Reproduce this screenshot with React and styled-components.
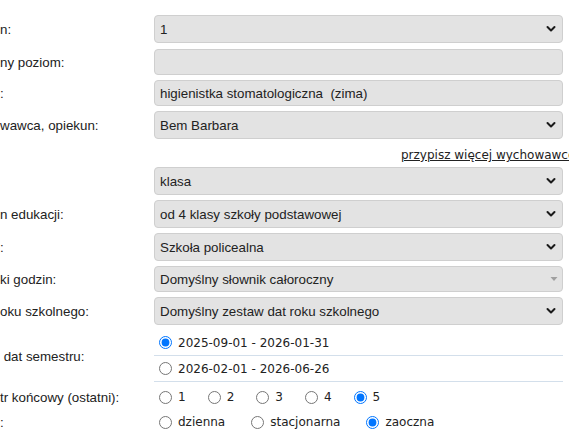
import React from 'react';
import styled, { createGlobalStyle } from 'styled-components';

const GlobalStyle = createGlobalStyle`
  html, body {
    margin: 0;
    padding: 0;
    overflow: hidden;
    background: #ffffff;
  }
  body {
    font-family: "Liberation Sans", Arial, sans-serif;
    font-size: 13.33px;
    color: #222222;
  }
`

const Form = styled.div`
  display: flex;
  flex-direction: column;
  gap: 5px;
  padding-top: 15px;
  width: 563px;
`

const Row = styled.div`
  display: flex;
  align-items: ${p => p.$align || 'center'};
  height: ${p => p.$h ? p.$h + 'px' : 'auto'};
  margin-bottom: ${p => p.$mb || 0}px;
`

const Label = styled.div`
  width: 154px;
  flex-shrink: 0;
  white-space: nowrap;
  overflow: hidden;
`

const Field = styled.div`
  flex: 1;
  min-width: 0;
  position: relative;
`

const Select = styled.select`
  appearance: none;
  -webkit-appearance: none;
  display: block;
  width: 100%;
  height: 28px;
  box-sizing: border-box;
  padding: 0 24px 0 5px;
  font: inherit;
  color: #222222;
  background: #e3e3e3;
  border: 1px solid #cfcfcf;
  border-radius: 4px;
  outline: none;

  &:disabled {
    opacity: 1;
    color: #222222;
    height: 26px;
  }
`

const TextInput = styled.input`
  display: block;
  width: 100%;
  height: 26px;
  box-sizing: border-box;
  padding: 0 5px;
  font: inherit;
  color: #222222;
  background: #e3e3e3;
  border: 1px solid #cfcfcf;
  border-radius: 4px;
  outline: none;
`

const Caret = styled.svg`
  position: absolute;
  right: ${p => p.$right || 7}px;
  top: 50%;
  transform: translateY(-50%);
  pointer-events: none;
`

const LinkCell = styled.div`
  flex: 1;
  padding-left: 247px;
  white-space: nowrap;
`

const MoreLink = styled.a`
  font-family: "DejaVu Sans", Verdana, sans-serif;
  font-size: 12px;
  line-height: 1;
  color: #222222;
  text-decoration: underline;
`

const DateList = styled.div`
  display: flex;
  flex-direction: column;
`

const DateRow = styled.label`
  display: flex;
  align-items: center;
  gap: 3px;
  height: 26px;
  box-sizing: border-box;
  border-bottom: 1px solid #d3dfeb;
`

const Options = styled.div`
  display: flex;
  align-items: center;
  gap: ${p => p.$gap}px;
`

const Option = styled.label`
  display: flex;
  align-items: center;
  gap: 3px;
  font-family: "DejaVu Sans", Verdana, sans-serif;
  font-size: 12px;
  color: #222222;
  white-space: nowrap;
`

const Radio = styled.input`
  width: 13px;
  height: 13px;
  margin: 0 3px 0 5px;
  flex-shrink: 0;
`

const DateText = styled.span`
  font-family: "DejaVu Sans", Verdana, sans-serif;
  font-size: 12px;
  color: #222222;
`

function Chevron() {
  return (
    <Caret width="10" height="7" viewBox="0 0 10 7">
      <path d="M1.5 1.5 L5 5 L8.5 1.5" fill="none" stroke="#1a1a1a" strokeWidth="2" strokeLinecap="round" strokeLinejoin="round" />
    </Caret>
  )
}

function Triangle() {
  return (
    <Caret width="8" height="5" viewBox="0 0 8 5" $right={5}>
      <path d="M0.5 0.5 L7.5 0.5 L4 4.5 Z" fill="#a0a0a0" />
    </Caret>
  )
}

function SelectField({ value, disabled }) {
  return (
    <Field>
      <Select value={value} disabled={disabled} onChange={() => {}}>
        <option value={value}>{value}</option>
      </Select>
      {disabled ? <Triangle /> : <Chevron />}
    </Field>
  )
}

export default function App() {
  return (
    <>
      <GlobalStyle />
      <Form>
        <Row $mb={1}>
          <Label>n:</Label>
          <SelectField value="1" />
        </Row>
        <Row>
          <Label>ny poziom:</Label>
          <Field><TextInput readOnly value="" /></Field>
        </Row>
        <Row>
          <Label>:</Label>
          <Field><TextInput readOnly value="higienistka stomatologiczna  (zima)" /></Field>
        </Row>
        <Row>
          <Label>wawca, opiekun:</Label>
          <SelectField value="Bem Barbara" />
        </Row>
        <Row $h={18} $align="flex-end">
          <Label />
          <LinkCell><MoreLink href="#">przypisz więcej wychowawców</MoreLink></LinkCell>
        </Row>
        <Row>
          <Label />
          <SelectField value="klasa" />
        </Row>
        <Row>
          <Label>n edukacji:</Label>
          <SelectField value="od 4 klasy szkoły podstawowej" />
        </Row>
        <Row>
          <Label>:</Label>
          <SelectField value="Szkoła policealna" />
        </Row>
        <Row>
          <Label>ki godzin:</Label>
          <SelectField value="Domyślny słownik całoroczny" disabled />
        </Row>
        <Row>
          <Label>oku szkolnego:</Label>
          <SelectField value="Domyślny zestaw dat roku szkolnego" />
        </Row>
        <Row>
          <Label>&nbsp;dat semestru:</Label>
          <Field>
            <DateList>
              <DateRow>
                <Radio type="radio" name="sem" defaultChecked />
                <DateText>2025-09-01 - 2026-01-31</DateText>
              </DateRow>
              <DateRow>
                <Radio type="radio" name="sem" />
                <DateText>2026-02-01 - 2026-06-26</DateText>
              </DateRow>
            </DateList>
          </Field>
        </Row>
        <Row $h={20}>
          <Label>tr końcowy (ostatni):</Label>
          <Options $gap={17}>
            {['1', '2', '3', '4', '5'].map(n => (
              <Option key={n}>
                <Radio type="radio" name="last" defaultChecked={n === '5'} />
                {n}
              </Option>
            ))}
          </Options>
        </Row>
        <Row $h={20}>
          <Label>:</Label>
          <Options $gap={21}>
            {['dzienna', 'stacjonarna', 'zaoczna'].map(f => (
              <Option key={f}>
                <Radio type="radio" name="form" defaultChecked={f === 'zaoczna'} />
                {f}
              </Option>
            ))}
          </Options>
        </Row>
      </Form>
    </>
  )
}
